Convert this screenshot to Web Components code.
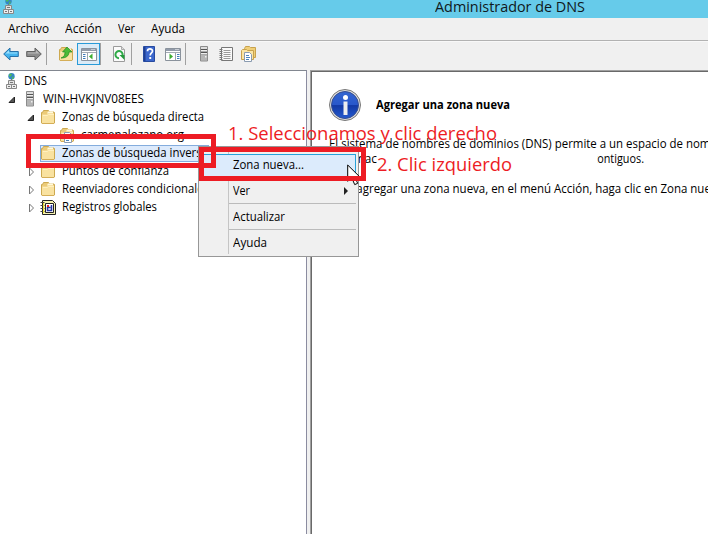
<!DOCTYPE html>
<html lang="es"><head><meta charset="utf-8"><title>Administrador de DNS</title>
<style>html,body{margin:0;width:708px;height:534px;overflow:hidden;background:#f0f0f0}</style></head>
<body><dns-manager></dns-manager>
<script>
const define=(name,html,after)=>customElements.define(name,class extends HTMLElement{
 constructor(){super();this.attachShadow({mode:'open'}).innerHTML=html;}
 connectedCallback(){if(after)after(this,this.shadowRoot);}
});

/* Text fitted horizontally to the width given in "w". */
define('fit-text','<style>:host{display:block;flex:none;white-space:pre;color:inherit}span{display:inline-block;transform-origin:0 50%}</style><span><slot></slot></span>',(h,r)=>{
 const s=r.querySelector('span'),w=+h.getAttribute('w');h.style.width=w+'px';
 const n=s.offsetWidth?s.getBoundingClientRect().width:0;
 if(n)s.style.transform=`scaleX(${w/n})`;
});

const folder='<path d="M1.5 3.500h1l1-2h5l1 1.500h4.500l.5 1V14l-1 .5H2l-.5-.5z" fill="#eccb78" stroke="#cda950"/><path d="M8 2.500h5v2H7z" fill="#fff9dc"/><path d="M2 5.500h5l1-1h6V14H2z" fill="#f9e2a0"/><path d="M3 6.500h4.500l1-1H14" fill="none" stroke="#fff0bf"/><path d="M2 14.500h12" stroke="#d5ae57"/>';
const server='<path d="M5.500.5h7V15h-7z" fill="#aaa" stroke="#8c8c8c"/><path d="M6 1h6v2H6z" fill="#ddd"/><path d="M6 3.500h6M6 6.500h6" stroke="#555"/><path d="M6 4.500h6M6 7.500h6" stroke="#eee"/><path d="M6 9h6v5.500H6z" fill="#b5b5b5"/><path d="M10 10h1.500v1.500H10z" fill="#efefef"/>';
const page='<path d="M5.500 5.500h5l2 2v8h-7z" fill="#fff" stroke="#8a9bb0"/><path d="M7 9.500h4M7 11.500h4M7 13.500h3" stroke="#4f86bd"/>';
const windowFrame='<path d="M.5 2.500h15v12H.5z" fill="#fff" stroke="#8a929c"/><path d="M1 3h14v2H1z" fill="#929baa"/><path d="M10.500 3.500h1M12.500 3.500h1" stroke="#fff"/><path d="M1 6.500h14" stroke="#a4abb4"/>';
const icons={
 folder,server,
 dns:'<circle cx="6.500" cy="3.300" r="3.200" fill="#3486c6"/><path d="M4 1.500l2-1 1 1-1 2H4zM7 4l2-.5-1 2.500-1 .5z" fill="#4dbb5a"/><path d="M6.500 6v2" fill="none" stroke="#7b7b7b"/><path d="M3.500 7.500h6v4h-6z" fill="#e2e2e2" stroke="#888"/><path d="M1.500 11.500h5v4h-5zM6.500 11.500h5v4h-5z" fill="#eee" stroke="#888"/><path d="M3 13.500h2M8 13.500h2M5 9.500h3" stroke="#777"/>',
 zone:folder+page,
 logs:'<path d="M2.500 1.500h10l3 3v11h-13z" fill="#f7f4b0" stroke="#222"/><path d="M.5 3.500h4M.5 6.500h4M.5 9.500h4M.5 12.500h4" stroke="#444"/><path d="M5.500 4.500h8v9h-8z" fill="#fff" stroke="#222"/><path d="M3.500 4v10" stroke="#eddf30"/><path d="M11.500 6v5.500h-4v-3h3" fill="none" stroke="#2437a5" stroke-width="1.500"/><path d="M7 6h2v2H7z" fill="#e52020"/>',
 back:'<path d="M.7 8L7 2v3.500h8.300v5H7V14z" fill="#45b4ee" stroke="#2670a8"/><path d="M2.500 7.500L6 4.200v2.300h8.300v1z" fill="#9de0fc"/>',
 forward:'<path d="M15.300 8L9 2v3.500H.7v5H9V14z" fill="#8d8d8d" stroke="#626262"/><path d="M13.500 7.500L10 4.200v2.300H1.700v1z" fill="#bcbcbc"/>',
 up:folder+'<path d="M3 12c3-1 4-3 4-6H4.500L9 1l5 5h-3c0 4-3 6-8 6z" fill="#4cba37" stroke="#238b1e" stroke-width=".7"/>',
 console:windowFrame+'<path d="M6.500 7v7" stroke="#9da5ae"/><path d="M2 8.500h3M2 10.500h3M2 12.500h3" stroke="#3f7cba" stroke-dasharray="2 .5"/><path d="M11.500 7.500v6L8 10.500z" fill="#3cad31"/>',
 refresh:'<path d="M2.500.5h8l3 3v12h-11z" fill="#fbfbfb" stroke="#9b9b9b"/><path d="M10.500.5v3h3" fill="#ddd" stroke="#aaa"/><path d="M8 12.200A3.600 3.600 0 1 1 11.600 9" fill="none" stroke="#2faa48" stroke-width="2"/><path d="M8.500 9h5v5z" fill="#239b3b"/>',
 help:'<path d="M2.500.5h11v15h-11z" fill="#3b66cc" stroke="#274a9f"/><path d="M3 1h1.500v14H3z" fill="#1f3f92"/><path d="M6.500 5.200c0-3 5-2.900 5-.2 0 2-2.300 2-2.300 4.500" fill="none" stroke="#fff" stroke-width="1.700"/><path d="M8.300 11h1.900v2H8.300z" fill="#fff"/>',
 action:windowFrame+'<path d="M10.500 7v7" stroke="#9da5ae"/><path d="M12 8.500h2.500M12 10.500h2.500M12 12.500h2.500" stroke="#3f7cba"/><path d="M4.500 7.500v6L8 10.500z" fill="#3cad31"/>',
 notes:'<path d="M3.500 1.500h11v13h-11z" fill="#fafafa" stroke="#777"/><path d="M5.500 4.500h7M5.500 6.500h7M5.500 8.500h7M5.500 10.500h7M5.500 12.500h7" stroke="#9b9b9b"/><path d="M1.500 3.500h3M1.500 5.500h3M1.500 7.500h3M1.500 9.500h3M1.500 11.500h3M1.500 13.500h3" stroke="#777"/>',
 zones:'<path d="M3.500 2.500l1-2h4l1 1h5v10h-11z" fill="#f0cf78" stroke="#c8a24d"/><path d="M.5 4.500l1-1h4l1 1h6v9H.5z" fill="#fae5a5" stroke="#c8a24d"/><path d="M3.500 6.500h5l2 2v7h-7z" fill="#fff" stroke="#8a9bb0"/><path d="M5 9.500h3M5 11.500h4M5 13.500h3" stroke="#4f86bd"/>',
 open:'<path d="M10.500 6v5.500H5z" fill="#555" stroke="#222"/>',
 closed:'<path d="M6.500 5l4 4-4 4z" fill="#fff" stroke="#777"/>'
};
define('ui-icon','<style>:host{display:block;flex:none;width:16px;height:16px}svg{display:block;overflow:visible}</style><svg width="16" height="16" viewBox="0 0 16 16"></svg>',(h,r)=>{r.querySelector('svg').innerHTML=icons[h.getAttribute('name')]||'';});

define('title-bar',`<style>:host{display:flex;height:18px;background:#66cbea;font:15px/18px "Open Sans",sans-serif;color:#101820;overflow:hidden}ui-icon{margin:-2px 0 0 2px}fit-text{margin:-3px 0 0 417px}</style><ui-icon name="dns"></ui-icon><fit-text w="150">Administrador de DNS</fit-text>`);
define('menu-bar',`<style>:host{display:flex;height:22px;box-sizing:border-box;padding-left:8px;gap:16px;font:12px/22px "Open Sans",sans-serif}</style><fit-text w="41">Archivo</fit-text><fit-text w="37">Acción</fit-text><fit-text w="17">Ver</fit-text><fit-text w="34">Ayuda</fit-text>`);
define('tool-bar',`<style>:host{display:flex;height:30px;box-sizing:border-box;border-top:1px solid #b2b2b2;box-shadow:inset 0 1px #f8f8f8;align-items:center;padding:0 0 4px 3px}i{width:1px;height:22px;background:#a0a0a0;margin:0}.on{box-sizing:border-box;width:23px;height:22px;border:1px solid #2a9bd8;background:#dbebf7;padding:2px 0 0 3px}</style>
<ui-icon name="back"></ui-icon><ui-icon name="forward" style="margin-left:7px"></ui-icon><i style="margin-left:4px"></i><ui-icon name="up" style="margin:0 3px 0 11px"></ui-icon><div class="on"><ui-icon name="console"></ui-icon></div><i></i><ui-icon name="refresh" style="margin-left:10px"></ui-icon><i style="margin-left:4px"></i><ui-icon name="help" style="margin-left:9px"></ui-icon><ui-icon name="action" style="margin-left:8px"></ui-icon><i style="margin-left:4px"></i><ui-icon name="server" style="margin-left:9px"></ui-icon><ui-icon name="notes" style="margin-left:7px"></ui-icon><ui-icon name="zones" style="margin-left:7px"></ui-icon>`);

/* Rows: indent, expander, icon, label, width, selected */
const rows=[[-12,'','dns','DNS',23],[4,'open','server','WIN-HVKJNV08EES',101],[23,'open','folder','Zonas de búsqueda directa',142],[42,'','zone','carmenalozano.org',103],[23,'','folder','Zonas de búsqueda inversa',146,1],[23,'closed','folder','Puntos de confianza',107],[23,'closed','folder','Reenviadores condicionales',147],[23,'closed','logs','Registros globales',95]];
customElements.define('dns-tree',class extends HTMLElement{constructor(){super();this.attachShadow({mode:'open'}).innerHTML=`<style>:host{display:block;box-sizing:border-box;width:307px;border-top:1px solid #828790;border-right:1px solid #8b8ca0;padding-top:1px;background:#fff;font:12px/18px "Open Sans",sans-serif;overflow:hidden}.row{display:flex;height:18px;align-items:center}.a{width:17px;height:16px;flex:none}.b{display:flex;align-items:center}.sel{height:17px;width:169px;box-shadow:inset 0 0 0 1px #84acdd;background:#dceafc}fit-text{margin-left:6px}.server{margin-left:-1px}.dns+fit-text{margin-left:3px}</style>`+rows.map(([x,e,i,t,w,s])=>`<div class="row" style="padding-left:${Math.max(x,0)}px"><div class="a" style="margin-left:${x<0?-13:x==4?0:0}px">${e?`<ui-icon name="${e}"></ui-icon>`:''}</div><div class="b ${s?'sel':''}" style="${i=='server'||i=='dns'?'margin-left:1px':''}"><ui-icon class="${i}" name="${i}"></ui-icon><fit-text w="${w}">${t}</fit-text></div></div>`).join('');}});

define('detail-pane',`<style>:host{display:block;flex:1;box-sizing:border-box;border:solid #a0a0a0;border-width:1px 0 0 1px;box-shadow:inset 1px 1px #696969;background:#fff;padding:17px 0 0 18px;font:12px/15px "Open Sans",sans-serif;overflow:hidden}header{display:flex;align-items:center;height:34px;gap:14px;font-weight:bold}svg{display:block}header fit-text{margin-top:-1px}p{margin:0}.t{margin-top:14px}.l{height:15px}.p{margin-top:15px}.split{display:flex;justify-content:space-between;width:315px}</style>
<header><svg width="33" height="34" viewBox="0 0 33 34"><defs><linearGradient id="g" x2="0" y2="1"><stop stop-color="#3466d1"/><stop offset=".5" stop-color="#2857ca"/><stop offset=".52" stop-color="#1239a5"/><stop offset="1" stop-color="#2459cf"/></linearGradient></defs><circle cx="16" cy="17" r="15.500" fill="#ddd" stroke="#777"/><circle cx="16" cy="17" r="13.500" fill="url(#g)" stroke="#344d91"/><circle cx="16.500" cy="9.500" r="2.500" fill="#fff"/><path d="M14.500 13.500h4V27h-4z" fill="#eee"/></svg><fit-text w="134">Agregar una zona nueva</fit-text></header>
<p class="t"><fit-text class="l" w="405">El sistema de nombres de dominios (DNS) permite a un espacio de nombres</fit-text></p><p class="split"><fit-text class="l" w="48">se almac</fit-text><fit-text class="l" w="52">contiguos.</fit-text></p><p class="p"><fit-text class="l" w="397">Para agregar una zona nueva, en el menú Acción, haga clic en Zona nueva.</fit-text></p>`);

define('context-menu',`<style>:host{position:absolute;left:198px;top:146px;width:161px;height:111px;box-sizing:border-box;border:1px solid #979797;background:#f0f0f0;padding:7px 2px 2px;font:12px/21px "Open Sans",sans-serif}.g{position:absolute;left:29px;top:2px;bottom:2px;width:1px;background:#c5c5c5}.i{height:25px;box-sizing:border-box;padding:1px 0 0 32px;margin-bottom:1px;position:relative;display:flex;justify-content:space-between}.h{height:23px;padding-top:0;line-height:19px;background:#dcebfc;border:1px solid #26a0da;padding-left:31px;margin-bottom:2px}.s:after{content:"";position:absolute;left:28px;right:0;bottom:0;border-bottom:1px solid #bbb}svg{margin:7px 8px 0 0}</style><div class="g"></div><div class="i h"><fit-text w="71">Zona nueva...</fit-text></div><div class="i s"><fit-text w="17">Ver</fit-text><svg width="4" height="8"><path d="M0 0l4 4-4 4z" fill="#222"/></svg></div><div class="i s"><fit-text w="52">Actualizar</fit-text></div><div class="i"><fit-text w="34">Ayuda</fit-text></div>`);

define('mark-note',`<style>:host{position:absolute;color:#ed1c24;font:19px/22px "Open Sans",sans-serif}</style><slot></slot>`);
define('mark-box',`<style>:host{position:absolute;box-sizing:border-box;border:5px solid #ed1c24}</style>`);
define('mouse-pointer',`<style>:host{position:absolute;left:347px;top:164px}svg{display:block}</style><svg width="13" height="22"><path d="M.7 1v16.300l4-3.700 3 7 3-1.300-3-6.500h5z" fill="#fff" stroke="#000"/></svg>`);

define('dns-manager',`<style>:host{position:relative;display:flex;flex-direction:column;width:708px;height:534px;overflow:hidden;background:#f0f0f0;color:#000}.body{display:flex;flex:1;gap:3px;min-height:0}.blank{position:absolute;left:377px;top:152px;width:220px;height:24px;background:#fff}</style>
<title-bar></title-bar><menu-bar></menu-bar><tool-bar></tool-bar><div class="body"><dns-tree></dns-tree><detail-pane></detail-pane></div>
<div class="blank"></div><context-menu></context-menu><mouse-pointer></mouse-pointer>
<mark-box style="left:26px;top:134px;width:190px;height:34px"></mark-box><mark-box style="left:199px;top:147px;width:167px;height:34px"></mark-box>
<mark-note style="left:228px;top:122px"><fit-text w="269">1. Seleccionamos y clic derecho</fit-text></mark-note><mark-note style="left:377px;top:153px"><fit-text w="135">2. Clic izquierdo</fit-text></mark-note>`);
</script></body></html>
